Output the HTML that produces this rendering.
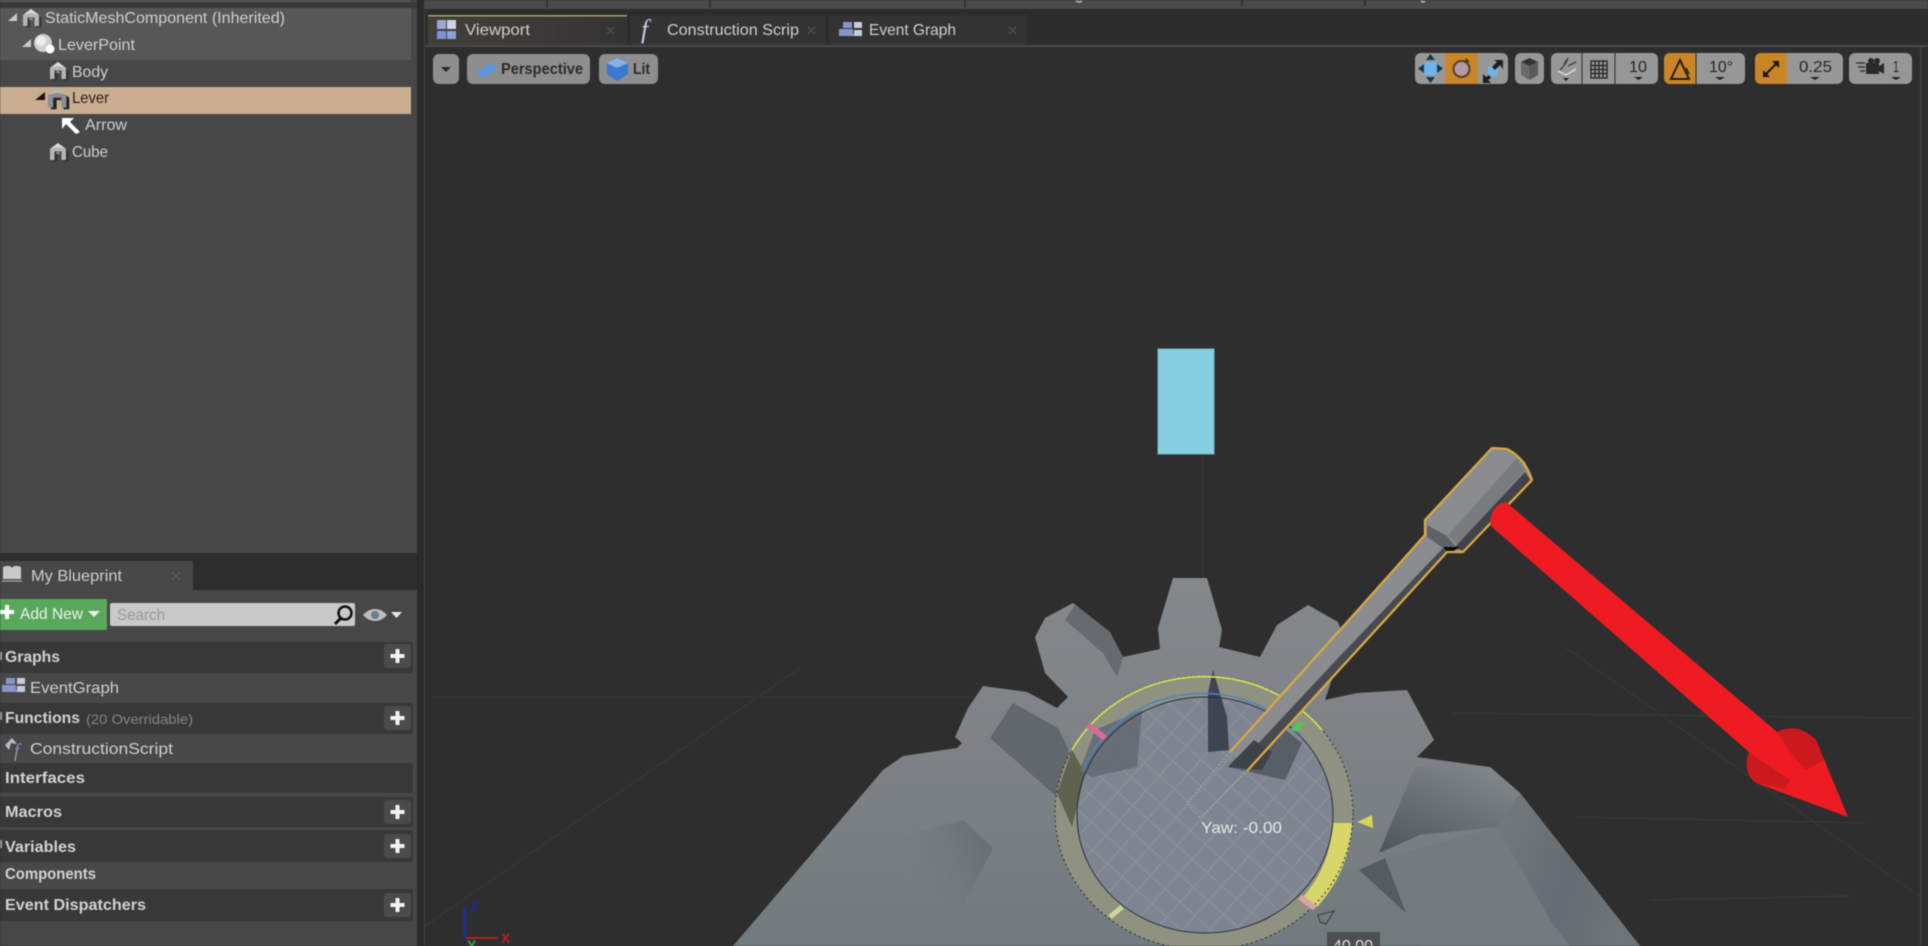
<!DOCTYPE html>
<html><head><meta charset="utf-8"><title>Blueprint Editor Viewport</title>
<style>
html,body{margin:0;padding:0;background:#2e2e2e;width:1928px;height:946px;overflow:hidden}
svg{display:block;filter:blur(.55px)}
text{font-family:"Liberation Sans",sans-serif;font-size:16px;fill:#cfcfcf}
.b{font-weight:bold;fill:#d2d2d2}
.d{font-weight:bold;fill:#2b2b2b}
</style></head><body>
<svg width="1928" height="946" viewBox="0 0 1928 946" xmlns="http://www.w3.org/2000/svg">
<defs>
<g id="house"><path d="M9 1 17 7V17H12V9H6V17H1V7Z" fill="#222" opacity=".55" transform="translate(1.5,1.5)"/><path d="M8 0 16 6V17H11.5V8.5H4.5V17H0V6Z" fill="#b4b4b4"/><path d="M8 0 16 6 8 4 0 6Z" fill="#dcdcdc"/><path d="M6 9h4v2H6z" fill="#8d8d8d"/></g>
<g id="plus"><rect x="0" y="0" width="27" height="24" rx="3" fill="#4b4b4b"/><path d="M13.500 5v14M6.500 12h14" stroke="#f2f2f2" stroke-width="4"/></g>
<g id="evg"><path d="M1 7h13v5H16V14H0V7Z" fill="#8796c8"/><rect x="4" y="0" width="9" height="6" fill="#8796c8"/><rect x="15" y="0" width="8" height="6" fill="#c8cbd8"/><rect x="15" y="8" width="8" height="6" fill="#c8cbd8"/></g>
<pattern id="hatch" width="20" height="20" patternUnits="userSpaceOnUse" patternTransform="rotate(42)">
<rect width="20" height="20" fill="#7e8591"/><path d="M0 0H20M0 0V20" stroke="#8a8f98" stroke-width="3"/></pattern>
<linearGradient id="gearG" x1="0" y1="0" x2="0" y2="1"><stop offset="0" stop-color="#85888b"/><stop offset=".55" stop-color="#7d8185"/><stop offset="1" stop-color="#717a7e"/></linearGradient>
<linearGradient id="shadeL" x1="1" y1=".35" x2="0" y2=".6"><stop offset="0" stop-color="#696e72"/><stop offset=".8" stop-color="#7d8185" stop-opacity="0"/></linearGradient>
<linearGradient id="shadeR" x1="0" y1="1" x2=".7" y2="0"><stop offset="0" stop-color="#4f5559"/><stop offset="1" stop-color="#80858a"/></linearGradient>
<linearGradient id="shadeS" x1="0" y1="0" x2="1" y2=".3"><stop offset="0" stop-color="#747b7f"/><stop offset=".6" stop-color="#666d72"/><stop offset="1" stop-color="#6e7579"/></linearGradient>
<linearGradient id="tabA" x1="0" x2="1"><stop offset="0" stop-color="#42403a"/><stop offset=".55" stop-color="#3c3a38"/><stop offset="1" stop-color="#343434"/></linearGradient>
<clipPath id="vp"><rect x="425" y="47" width="1495" height="899"/></clipPath>
</defs>

<!-- base -->
<rect width="1928" height="946" fill="#2d2d2d"/>
<!-- left panels -->
<rect x="0" y="0" width="417" height="553" fill="#474747"/>
<rect x="0" y="0" width="410" height="2" fill="#5a5a5a"/>
<rect x="0" y="2" width="417" height="6" fill="#393939"/>
<rect x="0" y="8" width="411" height="52" fill="#575757"/>
<rect x="0" y="87" width="411" height="27" fill="#c9ad90"/>
<use href="#house" x="23" y="9"/>
<path d="M8 21 17 13V21Z" fill="#c8c8c8"/>
<text x="45" y="23" textLength="240" lengthAdjust="spacingAndGlyphs">StaticMeshComponent (Inherited)</text>
<path d="M22 47 31 39V47Z" fill="#c8c8c8"/>
<circle cx="43" cy="43" r="9" fill="#cfcfcf"/><circle cx="41" cy="41" r="5" fill="#eee"/><circle cx="50" cy="49" r="4.500" fill="#fff"/>
<text x="58" y="50" textLength="77" lengthAdjust="spacingAndGlyphs">LeverPoint</text>
<use href="#house" x="50" y="62"/>
<text x="72" y="77" textLength="36" lengthAdjust="spacingAndGlyphs">Body</text>
<path d="M35 100 45 92V100Z" fill="#1c1410"/>
<g transform="translate(48,88) scale(1.15)"><path d="M9 1 17 7V17H12V9H6V17H1V7Z" fill="#222" transform="translate(1.5,1.5)"/><path d="M8 0 16 6V17H11.500V8.500H4.500V17H0V6Z" fill="#8f8f8f"/><path d="M8 0 16 6 8 4 0 6Z" fill="#b8b8b8"/></g>
<text x="72" y="103" textLength="37" lengthAdjust="spacingAndGlyphs" style="fill:#2c1c14">Lever</text>
<path d="M62 118 74 118 70 122 80 132 76 134 66 124 62 129Z" fill="#fff"/>
<text x="85" y="130" textLength="42" lengthAdjust="spacingAndGlyphs">Arrow</text>
<use href="#house" x="50" y="143"/>
<text x="72" y="157" textLength="36" lengthAdjust="spacingAndGlyphs">Cube</text>

<!-- My Blueprint -->
<rect x="0" y="553" width="417" height="393" fill="#2d2d2d"/>
<rect x="0" y="590" width="417" height="356" fill="#474747"/>
<rect x="0" y="561" width="193" height="30" fill="#474747"/>
<path d="M3 567c5-2 8-1 9 1 1-2 4-3 9-1v12H3Z" fill="#c9c9c9"/><path d="M2 580h20v2H2z" fill="#888"/>
<text x="31" y="581" textLength="91" lengthAdjust="spacingAndGlyphs">My Blueprint</text>
<path d="M172 572 180 580M180 572 172 580" stroke="#5c5c5c" stroke-width="1.500"/>
<rect x="0" y="599" width="107" height="31" fill="#59a85c"/>
<path d="M7 605v14M0 612h14" stroke="#fff" stroke-width="4"/>
<text x="20" y="619" textLength="63" lengthAdjust="spacingAndGlyphs" style="fill:#eaf3ea">Add New</text>
<path d="M88 611H100L94 617Z" fill="#f0f0f0"/>
<rect x="110" y="603" width="245" height="23" rx="2" fill="#c9c9c9"/>
<text x="117" y="620" textLength="48" lengthAdjust="spacingAndGlyphs" style="fill:#989898">Search</text>
<circle cx="345" cy="613" r="6.500" fill="none" stroke="#111" stroke-width="2.500"/><path d="M341 618 335 624" stroke="#111" stroke-width="3"/>
<path d="M363 615C370 607 380 607 387 615 380 623 370 623 363 615Z" fill="#bdbdbd"/><circle cx="375" cy="615" r="4" fill="#6e7a90"/>
<path d="M391 612H402L396.500 618Z" fill="#e8e8e8"/>

<rect x="0" y="642" width="413" height="31" rx="2" fill="#383838"/>
<text class="b" x="5" y="662" textLength="55" lengthAdjust="spacingAndGlyphs">Graphs</text>
<use href="#plus" x="384" y="644"/>
<rect x="0" y="673" width="413" height="30" fill="#484848"/>
<use href="#evg" x="2" y="678"/>
<text x="30" y="693" textLength="89" lengthAdjust="spacingAndGlyphs">EventGraph</text>
<rect x="0" y="703" width="413" height="31" rx="2" fill="#383838"/>
<text class="b" x="5" y="723" textLength="75" lengthAdjust="spacingAndGlyphs">Functions</text>
<text x="86" y="724" textLength="107" lengthAdjust="spacingAndGlyphs" style="font-size:14px;fill:#858585">(20 Overridable)</text>
<use href="#plus" x="384" y="706"/>
<rect x="0" y="734" width="413" height="29" fill="#484848"/>
<path d="M5 745 12 738 17 744 11 743 9 750Z" fill="#b9b9c9"/>
<text x="14" y="757" style="font-family:'Liberation Serif',serif;font-style:italic;font-size:19px;fill:#8796c8">f</text>
<text x="30" y="754" textLength="143" lengthAdjust="spacingAndGlyphs">ConstructionScript</text>
<rect x="0" y="763" width="413" height="30" rx="2" fill="#383838"/>
<text class="b" x="5" y="783" textLength="80" lengthAdjust="spacingAndGlyphs">Interfaces</text>
<rect x="0" y="797" width="413" height="30" rx="2" fill="#383838"/>
<text class="b" x="5" y="817" textLength="57" lengthAdjust="spacingAndGlyphs">Macros</text>
<use href="#plus" x="384" y="800"/>
<rect x="0" y="830" width="413" height="32" rx="2" fill="#383838"/>
<text class="b" x="5" y="852" textLength="71" lengthAdjust="spacingAndGlyphs">Variables</text>
<use href="#plus" x="384" y="834"/>
<rect x="0" y="862" width="413" height="27" fill="#484848"/>
<text class="b" x="5" y="879" textLength="91" lengthAdjust="spacingAndGlyphs">Components</text>
<rect x="0" y="889" width="413" height="32" rx="2" fill="#383838"/>
<text class="b" x="5" y="910" textLength="141" lengthAdjust="spacingAndGlyphs">Event Dispatchers</text>
<use href="#plus" x="384" y="893"/>
<rect x="0" y="652" width="2" height="8" fill="#999"/>
<rect x="0" y="712" width="2" height="8" fill="#999"/>
<rect x="0" y="840" width="2" height="8" fill="#999"/>
<rect x="417" y="0" width="7" height="946" fill="#2a2a2a"/>
<rect x="424" y="0" width="1" height="946" fill="#444"/>

<!-- top strip -->
<rect x="425" y="0" width="1503" height="9" fill="#4a4a4a"/>
<path d="M547 0V8M710 0V8M965 0V8M1242 0V6M1365 0V6" stroke="#2c2c2c" stroke-width="1.500"/>
<path d="M1076 1q3 2 6 0M1421 1q2 2 4 0" stroke="#bbb" stroke-width="1.500" fill="none"/>
<rect x="425" y="9" width="1503" height="37" fill="#2c2c2c"/>
<rect x="630" y="15" width="196" height="30" fill="#333"/>
<rect x="829" y="15" width="198" height="30" fill="#333"/>
<rect x="428" y="15" width="199" height="30" fill="url(#tabA)"/>
<rect x="428" y="15" width="199" height="1.500" fill="#a8a060"/>
<g transform="translate(437,20)"><rect width="9" height="9" fill="#9aa6d8"/><rect x="10" width="9" height="9" fill="#cfd3e6"/><rect y="11" width="9" height="8" fill="#7f92d4"/><rect x="10" y="11" width="9" height="8" fill="#8ea0da"/></g>
<text x="465" y="35" textLength="65" lengthAdjust="spacingAndGlyphs">Viewport</text>
<path d="M607 27 614 34M614 27 607 34" stroke="#4e4e4e" stroke-width="1.500"/>
<text x="641" y="38" style="font-family:'Liberation Serif',serif;font-style:italic;font-size:26px;fill:#c6cbe6">f</text>
<text x="667" y="35" textLength="132" lengthAdjust="spacingAndGlyphs">Construction Scrip</text>
<path d="M808 27 815 34M815 27 808 34" stroke="#4e4e4e" stroke-width="1.500"/>
<use href="#evg" x="839" y="22"/>
<text x="869" y="35" textLength="87" lengthAdjust="spacingAndGlyphs">Event Graph</text>
<path d="M1009 27 1016 34M1016 27 1009 34" stroke="#4e4e4e" stroke-width="1.500"/>

<!-- viewport -->
<rect x="425" y="45" width="1503" height="901" fill="#4a4a4a"/>
<rect x="425" y="47" width="1495" height="899" fill="#2e2e2e"/>
<rect x="1920" y="47" width="8" height="899" fill="#2c2c2c"/>
<rect x="1920" y="47" width="1.500" height="899" fill="#424242"/>
<g clip-path="url(#vp)">
<!-- faint grid -->
<g stroke="#383838" stroke-width="1.200" fill="none">
<path d="M425 926 800 668M430 697H985M1565 647 1925 900M1452 713 1914 718M1576 817 1865 823M1650 900 1850 896"/>
</g>
<path d="M1203 455V578" stroke="#383632" stroke-width="1.500"/>
<!-- cyan -->
<rect x="1158" y="349" width="56" height="105" fill="#86cfe0"/>
<rect x="1158" y="349" width="56" height="105" fill="none" stroke="#74b8c8" stroke-width="1"/>

<!-- gear -->
<path d="M733 946 883 770 903 756 957 748 962 743 955 737 968 708 983 686 1027 692 1057 708 1068 697 1045 673 1035 637 1045 618 1073 603 1110 632 1123 657 1160 649 1158 628 1173 578 1207 578 1222 630 1219 647 1260 657 1277 625 1308 605 1338 622 1345 640 1325 700 1357 693 1407 690 1434 740 1417 757 1490 767 1520 793 1640 946Z" fill="url(#gearG)"/>
<path d="M1065 620 1075 605 1110 632 1123 657 1117 677 1103 653Z" fill="#666b6f"/>
<path d="M990 738 1013 703 1058 728 1068 748 1075 827 1057 797Z" fill="#62676b"/>
<path d="M963 820 993 848 963 907 903 873 850 850Z" fill="url(#shadeL)"/>
<path d="M1379 853 1415 767 1490 767 1520 793 1497 827 1420 835Z" fill="url(#shadeR)"/>
<path d="M1385 858 1497 827 1550 920 1570 946 1420 946Z" fill="#747b7f"/>
<path d="M1497 827 1520 793 1640 946 1570 946 1550 920Z" fill="url(#shadeS)"/>
<path d="M1359 870 1385 858 1406 913Z" fill="#565b5f"/>

<!-- ring -->
<path d="M1055 813A149 137 0 1 1 1353 813 149 137 0 1 1 1055 813ZM1077 815A128 118 0 1 0 1333 815 128 118 0 1 0 1077 815Z" fill="#8f9280" fill-rule="evenodd"/>
<ellipse cx="1205" cy="815" rx="128" ry="118" fill="url(#hatch)"/>
<path d="M1072 750 1057 793 1072 827 1085 773Z" fill="#5f624e"/>
<path d="M1142 710 1137 767 1092 777 1080 770 1095 730Z" fill="#636971" opacity=".85"/>
<path d="M1228 767 1285 780 1302 743 1270 717Z" fill="#585e65"/>
<path d="M1208 752 1208 693 1213 670 1227 717 1229 750Z" fill="#3d4452"/>
<path d="M1352 823A149 137 0 0 1 1317 907L1303 897A128 118 0 0 0 1332 823Z" fill="#d8d66a"/>
<ellipse cx="1204" cy="813" rx="149" ry="137" fill="none" stroke="#2b2b18" stroke-width="1" stroke-dasharray="2 3"/>
<ellipse cx="1205" cy="815" rx="128" ry="118" fill="none" stroke="#262c3a" stroke-width="1"/>
<path d="M1072 750A149 137 0 0 1 1322 730" fill="none" stroke="#d9e64e" stroke-width="1.600"/>
<path d="M1083 770A128 118 0 0 1 1303 738" fill="none" stroke="#4b83c6" stroke-width="1.500"/>
<path d="M1088 725 1105 738" stroke="#d96a98" stroke-width="6"/>
<path d="M1300 897 1315 908" stroke="#d8a4aa" stroke-width="6"/>
<path d="M1110 917 1122 907" stroke="#d2d5a0" stroke-width="5"/>
<path d="M1357 822 1372 815 1373 828Z" fill="#d6d45a"/>
<path d="M1318 915 1334 911 1326 924 1320 922Z" fill="none" stroke="#3a3a2e" stroke-width="1"/>
<path d="M1290 730 1298 722 1305 722 1298 732Z" fill="#58c850" opacity=".9"/>
<path d="M1230 752 1187 803 1200 818 1247 771" fill="none" stroke="#a9adb3" stroke-width="1" stroke-dasharray="2 2"/>

<!-- lever -->
<path d="M1230 752 1340 630 1425 535 1425 520 1492 448 1507 449 1525 462 1532 480 1463 552 1447 552 1340 669 1247 771Z" fill="#8a8c90"/>
<path d="M1240 763 1340 656 1443 548 1447 552 1340 669 1247 771Z" fill="#474b51"/>
<path d="M1228 767 1254 740 1272 752 1262 770Z" fill="#3e4249"/>
<path d="M1517 458 1525 470 1458 545 1448 535Z" fill="#797b7f"/>
<path d="M1525 472 1531 481 1463 551 1455 547Z" fill="#40444a"/>
<path d="M1427 525 1447 536 1456 547 1443 548 1427 537Z" fill="#5f6164"/>
<path d="M1443 547 1460 547 1452 552 1447 552Z" fill="#0b0b0b"/>
<path d="M1230 752 1340 630 1425 535 1425 520 1492 448 1507 449 Q1525 458 1532 480 L1463 552 1447 552 1340 669 1247 771" fill="none" stroke="#d9a840" stroke-width="2.300" stroke-linejoin="round"/>

<!-- red arrow -->
<path d="M1490 523 Q1491 505 1506 502 L1777 732 Q1797 722 1816 740 L1848 817 1756 783 Q1742 772 1749 752 L1492 527Z" fill="#ee1c22"/>
<path d="M1777 732 Q1797 722 1816 740 L1824 760 1806 770 1790 752Z" fill="#cb191d"/>
<path d="M1749 752 Q1742 772 1756 783 L1785 789 1790 780 1772 768Z" fill="#cb191d"/>

<!-- gizmo -->
<path d="M465 907V940" stroke="#1c2c9c" stroke-width="2.500"/>
<path d="M466 938H498" stroke="#b02020" stroke-width="2"/>
<text x="470" y="911" style="font-size:14px;font-weight:bold;fill:#1c2c9c">Z</text>
<text x="501" y="943" style="font-size:14px;font-weight:bold;fill:#b82020">X</text>
<text x="467" y="950" style="font-size:14px;font-weight:bold;fill:#2fae4a">Y</text>

<text x="1201" y="833" textLength="81" lengthAdjust="spacingAndGlyphs" style="font-size:16px;fill:#e6e8ea">Yaw: -0.00</text>
<rect x="1327" y="932" width="53" height="20" fill="#4d4f50"/>
<text x="1333" y="951" style="font-size:16px;fill:#e0e0e0">40.00</text>
</g>

<!-- left toolbar -->
<rect x="433" y="54" width="26" height="30" rx="6" fill="#8e8e8e"/>
<path d="M441 67H451L446 72Z" fill="#2a2a2a"/>
<rect x="467" y="54" width="123" height="30" rx="6" fill="#8e8e8e"/>
<path d="M477 76 479 70 489 64 497 65 495 71 484 77Z" fill="#5c97dc"/>
<text class="d" x="501" y="74" textLength="82" lengthAdjust="spacingAndGlyphs" style="font-size:15.500px">Perspective</text>
<rect x="599" y="54" width="59" height="30" rx="6" fill="#8e8e8e"/>
<path d="M607 63 617 58 628 63V74L617 81 607 74Z" fill="#3c78d0"/><path d="M607 63 617 58 628 63 617 68Z" fill="#86b2ea"/>
<text class="d" x="633" y="74" textLength="17" lengthAdjust="spacingAndGlyphs">Lit</text>

<!-- right toolbar -->
<g fill="#979797">
<rect x="1415" y="53" width="93" height="31" rx="6"/>
<rect x="1515" y="53" width="29" height="31" rx="6"/>
<rect x="1551" y="53" width="107" height="31" rx="6"/>
<rect x="1664" y="53" width="81" height="31" rx="6"/>
<rect x="1755" y="53" width="88" height="31" rx="6"/>
<rect x="1849" y="53" width="63" height="31" rx="6"/>
</g>
<rect x="1445" y="53" width="33" height="31" fill="#c98629"/>
<path d="M1670 53h26v31h-26a6 6 0 0 1-6-6V59a6 6 0 0 1 6-6Z" fill="#c98629"/>
<path d="M1761 53h26v31h-26a6 6 0 0 1-6-6V59a6 6 0 0 1 6-6Z" fill="#c98629"/>
<path d="M1582 53V84M1615 53V84M1696 53V84" stroke="#2c2c2c" stroke-width="1"/>
<!-- move icon -->
<rect x="1424" y="62" width="13" height="13" rx="2" fill="#6fb4ee"/>
<path d="M1430.500 54 1435 60H1426ZM1430.500 83 1435 77H1426ZM1418 68.500 1424 64V73ZM1443 68.500 1437 64V73Z" fill="#143a50"/>
<!-- rotate icon -->
<circle cx="1461.500" cy="69" r="8" fill="#b39aa6" stroke="#5a3a18" stroke-width="2"/>
<path d="M1466 58 1470 62 1464 63Z" fill="#5a3a18"/>
<!-- scale icon -->
<rect x="1488" y="66" width="10" height="10" rx="2" fill="#6fb4ee"/>
<path d="M1494 60 1503 60 1503 69 1500 65 1495 70 1492 67 1497 62ZM1483 83V74L1486 77 1489 75 1491 78 1488 80 1491 83Z" fill="#1d1d1d"/>
<!-- surface cube -->
<path d="M1521 62 1529.500 58 1538 62 1529.500 66Z" fill="#333"/><path d="M1521 62V75L1529.500 80V66Z" fill="#6a6a6a"/><path d="M1538 62V75L1529.500 80V66Z" fill="#5a5a5a"/>
<!-- world -->
<g transform="translate(2,0)"><path d="M1558 70C1562 66 1565 62 1566 58M1566 66 1574 62M1566 58 1562 64" stroke="#444" stroke-width="1.500" fill="none"/>
<path d="M1556 71 1564 75 1574 69" fill="none" stroke="#ddd" stroke-width="1.500"/>
<path d="M1561 78H1567L1564 81Z" fill="#222"/></g>
<!-- grid -->
<g stroke="#222" stroke-width="1.300" fill="none" transform="translate(3,0)"><rect x="1588" y="61" width="16" height="17"/><path d="M1592 61V78M1596 61V78M1600 61V78M1588 65.500H1604M1588 69.500H1604M1588 73.500H1604"/></g>
<text x="1629" y="72" textLength="18" lengthAdjust="spacingAndGlyphs" style="fill:#262626">10</text>
<path d="M1634 77H1643L1638.500 80Z" fill="#222"/>
<!-- angle -->
<g transform="translate(3,0)"><path d="M1677 60 1668 79H1686Z" fill="none" stroke="#2a1c0c" stroke-width="2"/>
<path d="M1683 68 1686 74" stroke="#2a1c0c" stroke-width="1.500"/></g>
<text x="1709" y="72" textLength="24" lengthAdjust="spacingAndGlyphs" style="fill:#262626">10°</text>
<path d="M1715 77H1725L1720 80Z" fill="#222"/>
<!-- scale snap -->
<g transform="translate(5,0)"><path d="M1760 75 1772 63" stroke="#1d1208" stroke-width="2"/><path d="M1767 61H1774V68ZM1758 70V77H1765Z" fill="#1d1208"/></g>
<text x="1799" y="72" textLength="33" lengthAdjust="spacingAndGlyphs" style="fill:#262626">0.25</text>
<path d="M1810 77H1820L1815 80Z" fill="#222"/>
<!-- camera -->
<g transform="translate(1,0)"><path d="M1865 63h13v11h-13ZM1878 66 1883 63V74L1878 71Z" fill="#2a2a2a"/>
<circle cx="1870" cy="61" r="3" fill="#2a2a2a"/><circle cx="1876" cy="61" r="3" fill="#2a2a2a"/>
<path d="M1855 63H1864M1857 67H1864M1859 71H1864" stroke="#3a3a3a" stroke-width="1.500"/></g>
<text x="1893" y="72" textLength="6" lengthAdjust="spacingAndGlyphs" style="fill:#262626">1</text>
<path d="M1891 77H1901L1896 80Z" fill="#222"/>
</svg>
</body></html>
